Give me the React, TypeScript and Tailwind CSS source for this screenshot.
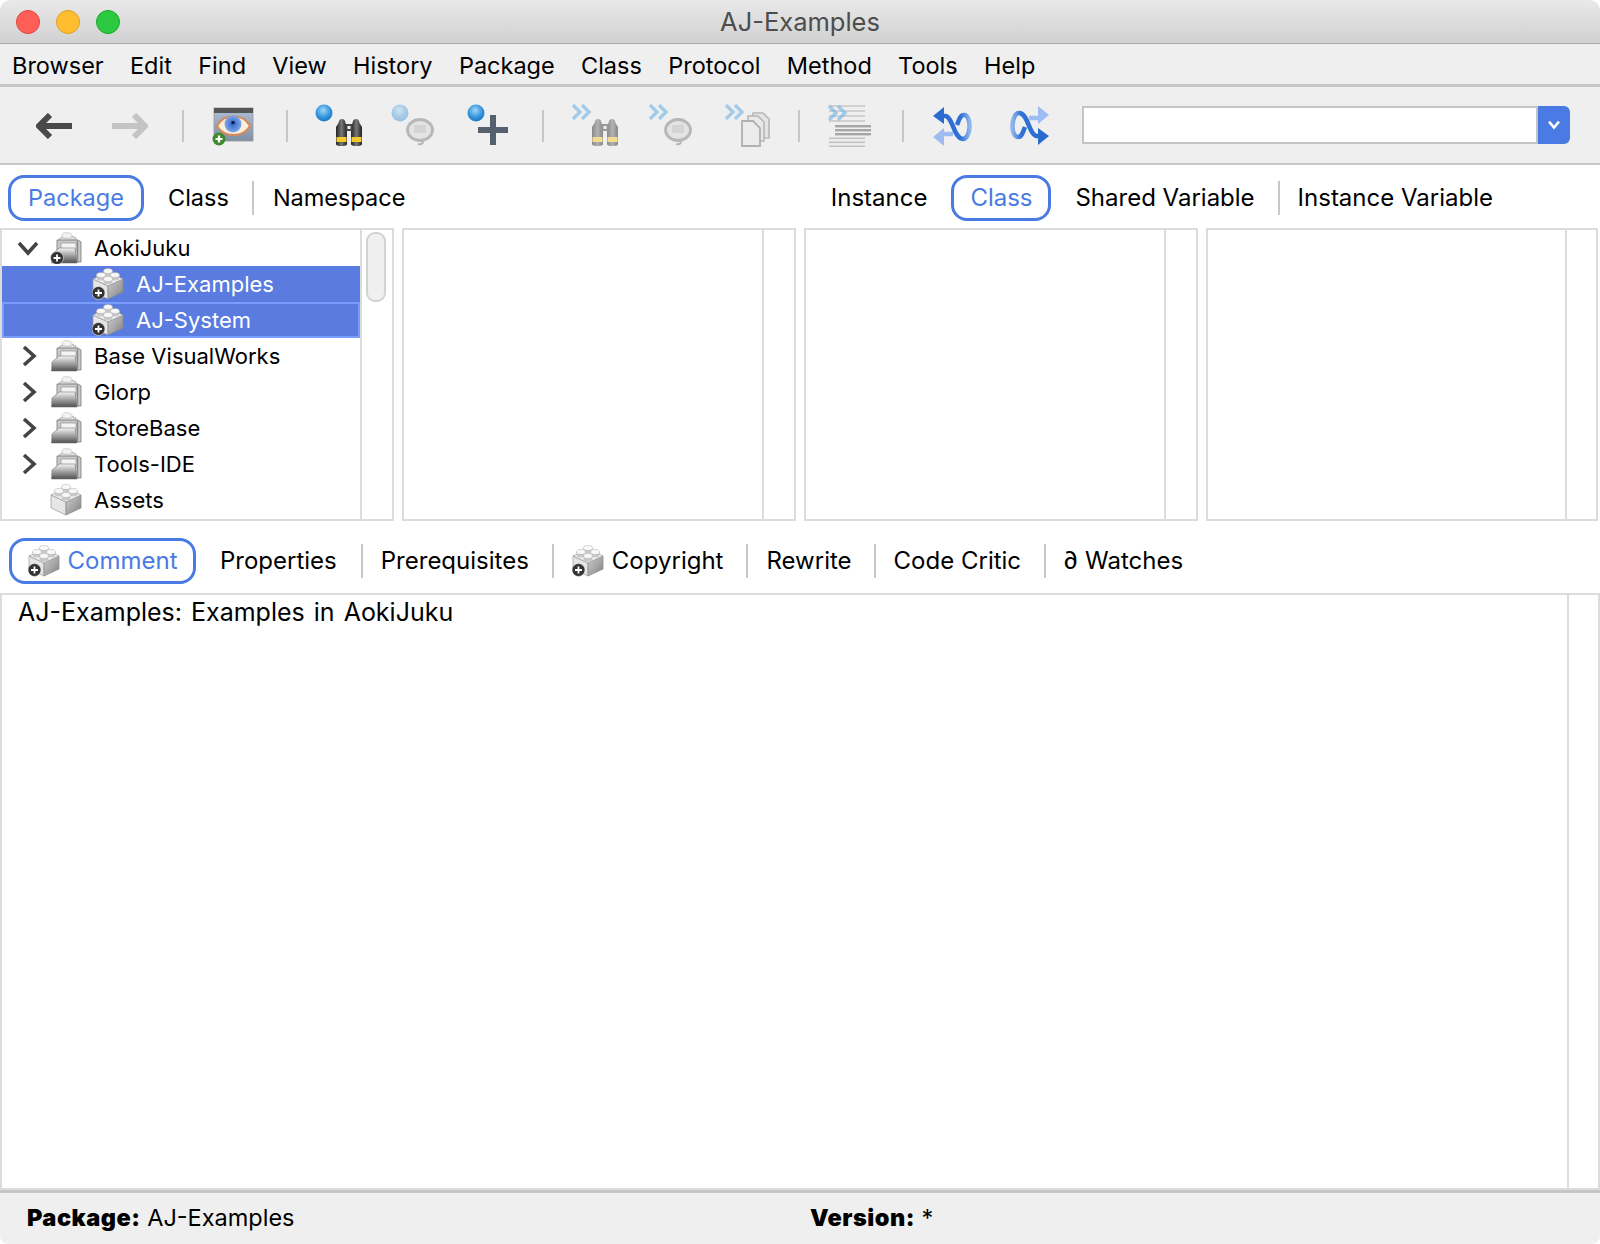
import React from "react";

const menus = ["Browser", "Edit", "Find", "View", "History", "Package", "Class", "Protocol", "Method", "Tools", "Help"];

function Defs() {
  return (
    <svg className="absolute h-0 w-0" aria-hidden="true">
      <defs>
        <radialGradient id="ball" cx="45%" cy="35%" r="70%">
          <stop offset="0%" stopColor="#9fd6f7" />
          <stop offset="55%" stopColor="#3b97de" />
          <stop offset="100%" stopColor="#1275c4" />
        </radialGradient>
        <linearGradient id="brickSide" x1="0" y1="0" x2="1" y2="1">
          <stop offset="0%" stopColor="#d0d0d0" />
          <stop offset="100%" stopColor="#808080" />
        </linearGradient>
        <linearGradient id="folderFront" x1="0" y1="0" x2="0" y2="1">
          <stop offset="0%" stopColor="#f5f5f5" />
          <stop offset="100%" stopColor="#4f4f4f" />
        </linearGradient>
        <linearGradient id="barrel" x1="0" y1="0" x2="1" y2="0">
          <stop offset="0%" stopColor="#222" />
          <stop offset="50%" stopColor="#777" />
          <stop offset="100%" stopColor="#222" />
        </linearGradient>
        <linearGradient id="eyeBg" x1="0" y1="0" x2="0" y2="1">
          <stop offset="0%" stopColor="#aebfd6" />
          <stop offset="100%" stopColor="#7f8fa6" />
        </linearGradient>
        <radialGradient id="iris" cx="50%" cy="50%" r="50%">
          <stop offset="0%" stopColor="#2f62c8" />
          <stop offset="100%" stopColor="#7fa8ea" />
        </radialGradient>
        <linearGradient id="syncLoop" x1="0" y1="0" x2="1" y2="0">
          <stop offset="0%" stopColor="#2a6bd0" />
          <stop offset="70%" stopColor="#2f72d8" />
          <stop offset="100%" stopColor="#8fb4ec" />
        </linearGradient>
      </defs>
    </svg>
  );
}

function PlusBadge({ cx, cy }: { cx: number; cy: number }) {
  return (
    <g>
      <circle cx={cx} cy={cy} r="6.5" fill="#333" stroke="#eee" strokeWidth="0.6" />
      <path d={`M${cx - 3.5} ${cy}h7M${cx} ${cy - 3.5}v7`} stroke="#fff" strokeWidth="1.8" />
    </g>
  );
}

function Brick({ plus = false, className = "" }: { plus?: boolean; className?: string }) {
  return (
    <svg viewBox="0 0 32 32" className={`shrink-0 blur-[0.3px] ${className}`}>
      <path d="M1 11 16 18V31L1 24Z" fill="#e6e6e6" stroke="#999" strokeWidth="0.7" />
      <path d="M16 18 31 11V24L16 31Z" fill="url(#brickSide)" stroke="#888" strokeWidth="0.7" />
      <path d="M16 4 31 11 16 18 1 11Z" fill="#efefef" stroke="#999" strokeWidth="0.7" />
      {[
        [16, 3],
        [9, 7],
        [23, 7],
        [16, 11],
      ].map(([x, y]) => (
        <g key={`${x}-${y}`}>
          <path d={`M${x - 4.5} ${y}v3a4.5 2.5 0 0 0 9 0v-3Z`} fill="#c8c8c8" />
          <ellipse cx={x} cy={y} rx="4.5" ry="2.5" fill="#f8f8f8" stroke="#aaa" strokeWidth="0.5" />
        </g>
      ))}
      {plus && <PlusBadge cx={6.5} cy={25} />}
    </svg>
  );
}

function Folder({ plus = false }: { plus?: boolean }) {
  return (
    <svg viewBox="0 0 32 32" className="h-8 w-8 shrink-0 blur-[0.3px]">
      <path d="M9 7 17 2 26 6 26 14 9 14Z" fill="#dcdcdc" stroke="#999" strokeWidth="0.7" />
      <ellipse cx="17" cy="3.5" rx="5" ry="2.8" fill="#f2f2f2" stroke="#aaa" strokeWidth="0.5" />
      <path d="M7 8H28L31 10V30H7Z" fill="#c9c9c9" stroke="#777" strokeWidth="0.8" />
      <path d="M11 11H26V19H11Z" fill="#f4f4f4" stroke="#888" strokeWidth="0.6" />
      <path d="M27.5 9V30" stroke="#8a8a8a" strokeWidth="1.4" />
      <path d="M9 16H25L27 31H1.5L2 22Z" fill="url(#folderFront)" stroke="#777" strokeWidth="0.6" />
      {plus && <PlusBadge cx={7} cy={26} />}
    </svg>
  );
}

function Ball({ faded = false }: { faded?: boolean }) {
  return (
    <svg viewBox="0 0 18 18" className={`h-[18px] w-[18px] shrink-0 blur-[0.3px] ${faded ? "opacity-40" : ""}`}>
      <circle cx="9" cy="9" r="8.5" fill="url(#ball)" />
    </svg>
  );
}

function Chevrons() {
  return (
    <svg viewBox="0 0 22 16" className="h-4 w-[22px] shrink-0 opacity-60 blur-[0.3px]">
      <path d="M2 1 9 8 2 15M11 1 18 8 11 15" fill="none" stroke="#6fb4e8" strokeWidth="3.4" />
    </svg>
  );
}

function Binoculars({ faded = false }: { faded?: boolean }) {
  return (
    <svg viewBox="0 0 28 29" className={`h-[29px] w-7 shrink-0 blur-[0.5px] ${faded ? "opacity-50" : ""}`}>
      <path d="M3.5 5Q4 1 7 1 10 1 10.5 5L12 9V26Q12 28 6.5 28 1 28 1 26V9Z" fill="url(#barrel)" />
      <path d="M24.5 5Q24 1 21 1 18 1 17.5 5L16 9V26Q16 28 21.5 28 27 28 27 26V9Z" fill="url(#barrel)" />
      <rect x="11" y="6" width="6" height="7" fill="#444" />
      <rect x="12.5" y="8" width="3" height="3" fill="#eee" />
      <rect x="1.5" y="19" width="10" height="5" fill="#f4c92e" />
      <rect x="16.5" y="19" width="10" height="5" fill="#f4c92e" />
    </svg>
  );
}

function Bubble() {
  return (
    <svg viewBox="0 0 30 30" className="h-[30px] w-[30px] shrink-0 opacity-70 blur-[0.4px]">
      <ellipse cx="15" cy="13" rx="12.5" ry="10.5" fill="#dedede" stroke="#a0a0a0" strokeWidth="2.8" />
      <rect x="9" y="8" width="12" height="8" fill="#c9c9c9" />
      <path d="M17 23.5C19 26 17 28 13 27" fill="none" stroke="#a0a0a0" strokeWidth="2" />
    </svg>
  );
}

function Docs() {
  return (
    <svg viewBox="0 0 30 35" className="h-[35px] w-[30px] shrink-0 blur-[0.3px]">
      <path d="M12 1H22L28 7V26H12Z" fill="#e4e4e4" stroke="#b6b6b6" strokeWidth="1.6" />
      <path d="M7 4H17L23 10V29H7Z" fill="#e8e8e8" stroke="#b6b6b6" strokeWidth="1.6" />
      <path d="M1 9H12L19 16V34H1Z" fill="#ececec" stroke="#b0b0b0" strokeWidth="1.8" />
    </svg>
  );
}

function TextLines() {
  return (
    <svg viewBox="0 0 44 42" className="h-[42px] w-11 shrink-0 blur-[0.3px]">
      {[0, 5, 10, 15].map((y) => (
        <rect key={y} x="2" y={y} width="36" height="2" fill="#d0d0d0" />
      ))}
      {[20, 24, 28].map((y) => (
        <rect key={y} x="8" y={y} width="36" height="2.4" fill="#a6a6a6" />
      ))}
      {[33, 37, 41].map((y) => (
        <rect key={y} x="2" y={y - 0.5} width="36" height="1.6" fill="#c2c2c2" />
      ))}
    </svg>
  );
}

function Sync({ flip = false }: { flip?: boolean }) {
  return (
    <svg viewBox="0 0 40 40" className={`h-10 w-10 shrink-0 blur-[0.5px] ${flip ? "rotate-180" : ""}`}>
      <path d="M20 28H8" fill="none" stroke="#9dbcf2" strokeWidth="4.5" />
      <path d="M0 31 11 22V40Z" fill="#9dbcf2" />
      <path
        d="M8 10H13C20 12 21 33 30 33 38 33 39 9 31 9 27 9 26 14 24 19"
        fill="none"
        stroke="url(#syncLoop)"
        strokeWidth="4.5"
      />
      <path d="M0 10 11 1V18Z" fill="#2a6bd0" />
    </svg>
  );
}

function Eye() {
  return (
    <svg viewBox="0 0 42 39" className="h-[39px] w-[42px] shrink-0 blur-[0.3px]">
      <rect x="2" y="1" width="39" height="33" fill="url(#eyeBg)" stroke="#999" strokeWidth="0.8" />
      <rect x="2" y="1" width="39" height="5" fill="#555" />
      <path d="M5 19C12 6 31 6 38 19 31 31 12 31 5 19Z" fill="#fbeedd" stroke="#d88a55" strokeWidth="2" />
      <circle cx="21" cy="17" r="8.5" fill="url(#iris)" />
      <rect x="19.5" y="14" width="3" height="3" fill="#0b1a40" />
      <circle cx="7" cy="32" r="6.5" fill="#3f8a2e" />
      <path d="M3.5 32h7M7 28.5v7" stroke="#fff" strokeWidth="2.2" />
    </svg>
  );
}

function Sep() {
  return <div className="h-8 w-[2px] shrink-0 bg-[#c6c6c6]" />;
}

function TreeRow({
  label,
  open,
  folder,
  plus,
}: {
  label: string;
  open?: boolean;
  folder?: boolean;
  plus?: boolean;
}) {
  return (
    <div className="flex h-9 items-center pl-[14px] text-[22px] text-black">
      <svg viewBox="0 0 24 24" className="h-6 w-6 shrink-0">
        {open ? (
          <path d="M3 7 12 17 21 7" fill="none" stroke="#444" strokeWidth="3.6" />
        ) : folder ? (
          <path d="M8 3 18 12 8 21" fill="none" stroke="#444" strokeWidth="3.6" />
        ) : null}
      </svg>
      <div className="ml-[10px]">{folder ? <Folder plus={plus} /> : <Brick className="h-8 w-8" />}</div>
      <span className="ml-[12px]">{label}</span>
    </div>
  );
}

function SelectedRow({ label, focus }: { label: string; focus?: boolean }) {
  return (
    <div
      className={`flex h-9 items-center text-[22px] text-white bg-[#5a7be0] ${
        focus ? "border-2 border-[#7b9cff] pl-[88px]" : "pl-[90px]"
      }`}
    >
      <Brick plus className="h-8 w-8" />
      <span className="ml-[12px]">{label}</span>
    </div>
  );
}

function EmptyPane({ last }: { last?: boolean }) {
  return (
    <div className="flex border-2 border-[#dcdcdc] bg-white">
      <div className="flex-1" />
      <div className={`border-l-2 border-[#dcdcdc] ${last ? "w-[31px]" : "w-[32px]"}`} />
    </div>
  );
}

export default function App() {
  return (
    <div className="flex h-[1244px] w-[1600px] flex-col overflow-hidden rounded-t-[10px] rounded-b-[8px] bg-white font-['Inter',sans-serif] text-[24px] text-black">
      <Defs />

      {/* title bar */}
      <div className="relative flex h-[44px] shrink-0 items-center border-b border-[#a9a9a9] bg-gradient-to-b from-[#e9e9e9] to-[#d1d1d1] pl-4">
        <div className="flex gap-4">
          <div className="h-6 w-6 rounded-full border border-[#e0443e] bg-[#ff5f57]" />
          <div className="h-6 w-6 rounded-full border border-[#dea123] bg-[#febc2e]" />
          <div className="h-6 w-6 rounded-full border border-[#1aab29] bg-[#2bc840]" />
        </div>
        <div className="absolute inset-x-0 pt-[2px] text-center text-[25.5px] text-[#4d4d4d]">AJ-Examples</div>
      </div>

      {/* menu bar */}
      <div className="flex h-[43px] shrink-0 items-center gap-[26.3px] border-b-[3px] border-[#c8c8c8] bg-[#efefef] pl-[12px] pt-[3px] text-[23.5px]">
        {menus.map((m) => (
          <span key={m}>{m}</span>
        ))}
      </div>

      {/* toolbar */}
      <div className="flex h-[78px] shrink-0 items-center border-b-2 border-[#c8c8c8] bg-[#efefef] pt-[2px]">
        <svg viewBox="0 0 36 26" className="ml-9 h-[26px] w-9 shrink-0">
          <path d="M14 2 3 13 14 24M4 13H36" fill="none" stroke="#4a4a4a" strokeWidth="6" />
        </svg>
        <svg viewBox="0 0 36 26" className="ml-[40px] h-[26px] w-9 shrink-0">
          <path d="M22 2 33 13 22 24M32 13H0" fill="none" stroke="#c4c4c4" strokeWidth="6" />
        </svg>
        <div className="ml-[34px]">
          <Sep />
        </div>
        <div className="ml-[28px]">
          <Eye />
        </div>
        <div className="ml-[32px]">
          <Sep />
        </div>
        <div className="ml-[27px] flex h-[44px] w-[48px] shrink-0 justify-between">
          <Ball />
          <div className="mt-[14px] -ml-[2px]">
            <Binoculars />
          </div>
        </div>
        <div className="ml-[28px] flex h-[44px] w-[44px] shrink-0">
          <Ball faded />
          <div className="-ml-[4px] mt-[13px]">
            <Bubble />
          </div>
        </div>
        <div className="ml-[32px] flex h-[44px] w-[42px] shrink-0">
          <Ball />
          <svg viewBox="0 0 30 30" className="-ml-[7px] mt-[11px] h-[30px] w-[30px] shrink-0 blur-[0.3px]">
            <path d="M15 0V30M0 15H30" stroke="#55606e" strokeWidth="6" />
          </svg>
        </div>
        <div className="ml-[33px]">
          <Sep />
        </div>
        <div className="ml-[27px] flex h-[44px] w-[48px] shrink-0">
          <Chevrons />
          <div className="-ml-[2px] mt-[14px]">
            <Binoculars faded />
          </div>
        </div>
        <div className="ml-[29px] flex h-[44px] w-[43px] shrink-0">
          <Chevrons />
          <div className="-ml-[7px] mt-[13px]">
            <Bubble />
          </div>
        </div>
        <div className="ml-[33px] flex h-[44px] w-[47px] shrink-0">
          <Chevrons />
          <div className="-ml-[5px] mt-[8px]">
            <Docs />
          </div>
        </div>
        <div className="ml-[27px]">
          <Sep />
        </div>
        <div className="relative ml-[27px] h-[42px] w-[44px] shrink-0">
          <TextLines />
          <div className="absolute left-0 top-0">
            <Chevrons />
          </div>
        </div>
        <div className="ml-[31px]">
          <Sep />
        </div>
        <div className="ml-[29px]">
          <Sync />
        </div>
        <div className="ml-[36px]">
          <Sync flip />
        </div>
        <div className="-mt-[2px] ml-[33px] flex h-[38px] shrink-0">
          <div className="h-full w-[456px] border-2 border-[#c4c4c4] bg-white" />
          <div className="flex h-full w-8 items-center justify-center rounded-r-[6px] bg-[#4a7ae4]">
            <svg viewBox="0 0 16 12" className="h-[10px] w-[14px]">
              <path d="M2 2 8 9 14 2" fill="none" stroke="#fff" strokeWidth="3" />
            </svg>
          </div>
        </div>
      </div>

      {/* browser tabs */}
      <div className="flex h-[63px] shrink-0 items-center justify-between pr-[107px] pt-[2px] text-[23.5px]">
        <div className="flex items-center pl-2">
          <div className="flex h-[46px] w-[136px] items-center justify-center rounded-[16px] border-[3px] border-[#4a7ae4] text-[#4a7ae4]">
            Package
          </div>
          <span className="ml-[24px]">Class</span>
          <div className="ml-[23px] h-[34px] w-[2px] bg-[#c8c8c8]" />
          <span className="ml-[19px]">Namespace</span>
        </div>
        <div className="flex items-center text-[24px]">
          <span>Instance</span>
          <div className="ml-[24px] flex h-[46px] w-[100px] items-center justify-center rounded-[16px] border-[3px] border-[#4a7ae4] text-[#4a7ae4]">
            Class
          </div>
          <span className="ml-[24px]">Shared Variable</span>
          <div className="ml-[23px] h-[34px] w-[2px] bg-[#c8c8c8]" />
          <span className="ml-[18px]">Instance Variable</span>
        </div>
      </div>

      {/* panes */}
      <div className="grid h-[293px] shrink-0 grid-cols-[394px_394px_394px_392px] gap-2">
        <div className="flex overflow-hidden border-2 border-[#dcdcdc] bg-white">
          <div className="min-w-0 flex-1">
            <TreeRow label="AokiJuku" open folder plus />
            <SelectedRow label="AJ-Examples" />
            <SelectedRow label="AJ-System" focus />
            <TreeRow label="Base VisualWorks" folder />
            <TreeRow label="Glorp" folder />
            <TreeRow label="StoreBase" folder />
            <TreeRow label="Tools-IDE" folder />
            <TreeRow label="Assets" />
          </div>
          <div className="w-[32px] shrink-0 border-l-2 border-[#dcdcdc] pl-[4px] pt-[2px]">
            <div className="h-[70px] w-5 rounded-[9px] border-2 border-[#d2d2d2] bg-[#efefef]" />
          </div>
        </div>
        <EmptyPane />
        <EmptyPane />
        <EmptyPane last />
      </div>

      {/* comment tabs */}
      <div className="flex h-[72px] shrink-0 items-center pl-[9px] pt-[7px] text-[24px]">
        <div className="flex h-[46px] w-[187px] items-center justify-center gap-[8px] rounded-[16px] border-[3px] border-[#4a7ae4] text-[#4a7ae4]">
          <Brick plus className="h-8 w-8" />
          Comment
        </div>
        <span className="ml-[24px]">Properties</span>
        <div className="ml-[24px] h-[34px] w-[2px] bg-[#c8c8c8]" />
        <span className="ml-[18px]">Prerequisites</span>
        <div className="ml-[23px] h-[34px] w-[2px] bg-[#c8c8c8]" />
        <div className="ml-[18px]">
          <Brick plus className="h-8 w-8" />
        </div>
        <span className="ml-[8px]">Copyright</span>
        <div className="ml-[23px] h-[34px] w-[2px] bg-[#c8c8c8]" />
        <span className="ml-[18px]">Rewrite</span>
        <div className="ml-[22px] h-[34px] w-[2px] bg-[#c8c8c8]" />
        <span className="ml-[18px]">Code Critic</span>
        <div className="ml-[23px] h-[34px] w-[2px] bg-[#c8c8c8]" />
        <span className="ml-[17px]">∂ Watches</span>
      </div>

      {/* comment text */}
      <div className="flex h-[597px] shrink-0 border-2 border-[#dcdcdc] bg-white">
        <div className="-mt-[1px] flex-1 pl-4 text-[25px] [word-spacing:2px]">AJ-Examples: Examples in AokiJuku</div>
        <div className="w-[31px] border-l-2 border-[#dcdcdc]" />
      </div>

      {/* status bar */}
      <div className="flex flex-1 items-center border-t-[3px] border-[#c6c6c6] bg-[#efefef] pb-[2px] text-[23.5px]">
        <div className="w-[810px] pl-[27px]">
          <span className="font-black tracking-[0.5px]">Package:</span> AJ-Examples
        </div>
        <div>
          <span className="font-black tracking-[0.5px]">Version:</span> *
        </div>
      </div>
    </div>
  );
}
